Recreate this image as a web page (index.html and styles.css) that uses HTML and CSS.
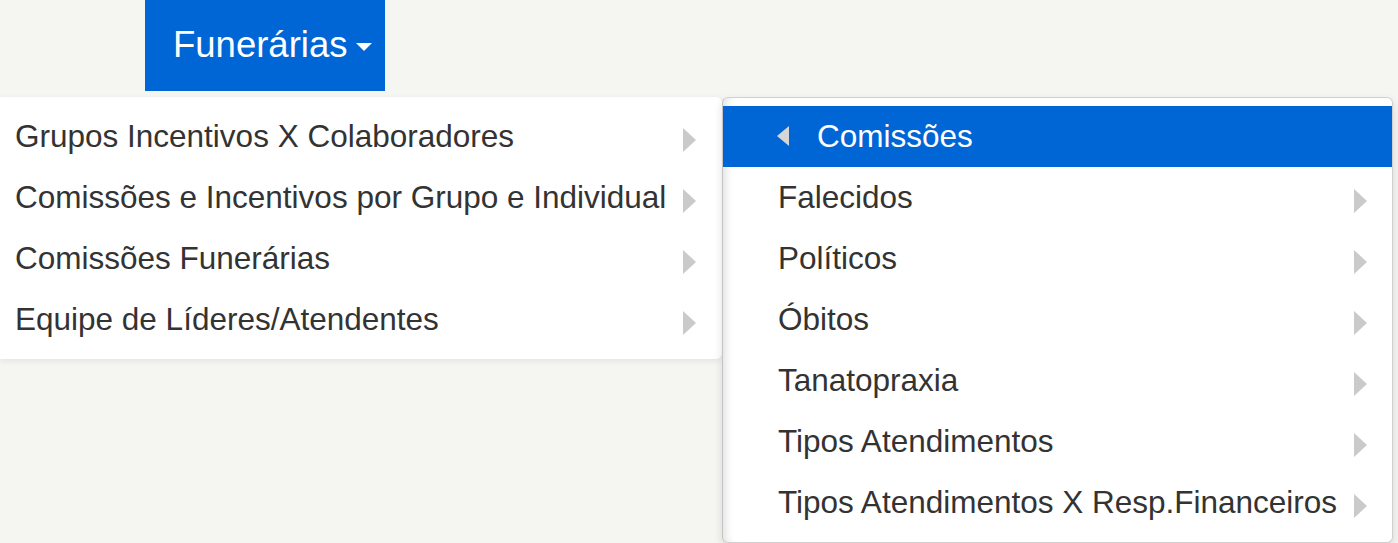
FILE: index.html
```html
<!DOCTYPE html>
<html lang="pt">
<head>
<meta charset="utf-8">
<title>Funerárias</title>
<link rel="stylesheet" href="styles.css">
</head>
<body>
<div class="navbar">
  <a class="nav-btn">Funerárias<span class="caret"></span></a>
</div>
<div class="menus">
  <ul class="menu menu-main">
    <li class="item"><span>Grupos Incentivos X Colaboradores</span><i class="arrow-r"></i></li>
    <li class="item"><span>Comissões e Incentivos por Grupo e Individual</span><i class="arrow-r"></i></li>
    <li class="item"><span>Comissões Funerárias</span><i class="arrow-r"></i></li>
    <li class="item"><span>Equipe de Líderes/Atendentes</span><i class="arrow-r"></i></li>
  </ul>
  <ul class="menu menu-sub">
    <li class="item item-active"><i class="arrow-l"></i><span>Comissões</span></li>
    <li class="item"><span>Falecidos</span><i class="arrow-r"></i></li>
    <li class="item"><span>Políticos</span><i class="arrow-r"></i></li>
    <li class="item"><span>Óbitos</span><i class="arrow-r"></i></li>
    <li class="item"><span>Tanatopraxia</span><i class="arrow-r"></i></li>
    <li class="item"><span>Tipos Atendimentos</span><i class="arrow-r"></i></li>
    <li class="item"><span>Tipos Atendimentos X Resp.Financeiros</span><i class="arrow-r"></i></li>
  </ul>
</div>
</body>
</html>
```
FILE: styles.css
```css
html, body {
  margin: 0;
  padding: 0;
  background: #f5f5f2;
  font-family: "Liberation Sans", Arial, sans-serif;
  color: #333;
  overflow: hidden;
}
.navbar {
  display: flex;
  padding-left: 145px;
  height: 91px;
}
.nav-btn {
  display: flex;
  align-items: center;
  width: 240px;
  height: 91px;
  background: #0066d6;
  color: #fff;
  font-size: 36.5px;
  padding: 0 0 2px 28px;
  box-sizing: border-box;
}
.caret {
  display: inline-block;
  width: 0;
  height: 0;
  margin-left: 9px;
  margin-top: 4px;
  border-top: 8px solid #fff;
  border-left: 8.5px solid transparent;
  border-right: 8.5px solid transparent;
}
.menus {
  display: flex;
  align-items: flex-start;
  margin-top: 6px;
}
.menu {
  list-style: none;
  margin: 0;
  padding: 9px 0;
  background: #fff;
  box-sizing: border-box;
  font-size: 31.5px;
}
.menu-main {
  width: 722px;
  border-radius: 0 6px 6px 0;
  box-shadow: 0 2px 6px rgba(0,0,0,0.08);
}
.menu-sub {
  width: 671px;
  border: 1px solid #d0d0d0;
  border-left-color: #c4c4c4;
  border-radius: 6px;
  box-shadow: inset 10px 0 10px -8px rgba(0,0,0,0.14), 0 4px 10px rgba(0,0,0,0.12);
  padding-top: 8px;
}
.item {
  display: flex;
  align-items: center;
  justify-content: space-between;
  height: 61px;
  white-space: nowrap;
}
.menu-main .item {
  padding: 0 26px 0 15px;
}
.menu-sub .item {
  padding: 0 25px 0 55px;
}
.item-active {
  background: #0066d6;
  color: #fff;
  justify-content: flex-start;
}
.menu-sub .item-active {
  padding-left: 54px;
}
.arrow-r {
  display: block;
  width: 0;
  height: 0;
  margin-top: 6px;
  border-left: 13px solid #cacaca;
  border-top: 12px solid transparent;
  border-bottom: 12px solid transparent;
}
.arrow-l {
  display: block;
  width: 0;
  height: 0;
  margin-right: 28px;
  margin-top: -2px;
  border-right: 12px solid #d6d6d6;
  border-top: 10px solid transparent;
  border-bottom: 10px solid transparent;
}
```
